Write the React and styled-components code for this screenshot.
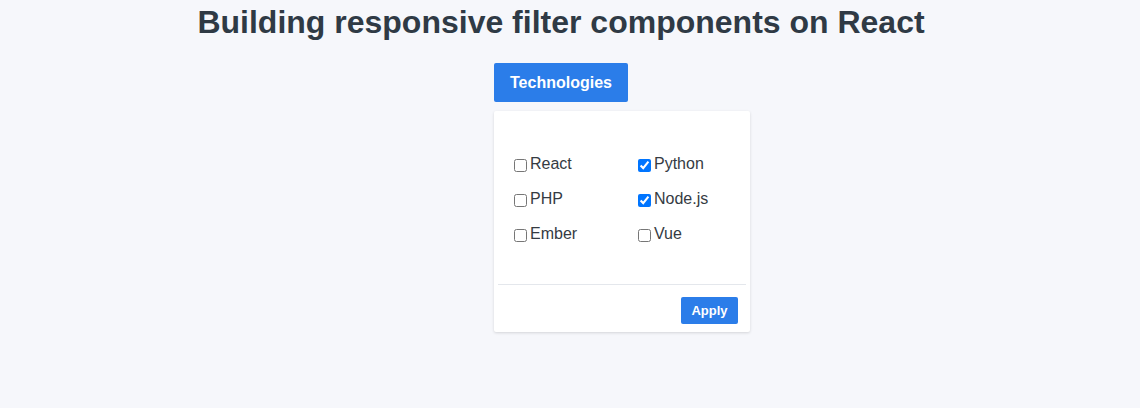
import React, { useState } from "react";
import styled, { createGlobalStyle } from "styled-components";

const GlobalStyle = createGlobalStyle`
  html, body {
    margin: 0;
    padding: 0;
    background: #f6f7fb;
    font-family: "Liberation Sans", Arial, sans-serif;
  }
`;

const Page = styled.div`
  width: 1122px;
  height: 408px;
  display: flex;
  flex-direction: column;
  align-items: center;
`;

const Title = styled.h1`
  margin: 4px 0 0;
  font-size: 32px;
  font-weight: 700;
  color: #2f3a45;
  line-height: 37px;
`;

const Dropdown = styled.div`
  position: relative;
  margin-top: 22px;
`;

const ToggleButton = styled.button`
  width: 134px;
  height: 39px;
  border: none;
  border-radius: 2px;
  background: #2b7de9;
  color: #fff;
  font-family: inherit;
  font-size: 16px;
  font-weight: 700;
  cursor: pointer;
  padding: 0;
`;

const Panel = styled.div`
  position: absolute;
  top: calc(100% + 9px);
  left: 0;
  width: 256px;
  background: #fff;
  border-radius: 2px;
  box-shadow: 0 1px 3px rgba(0, 0, 0, 0.14);
  box-sizing: border-box;
`;

const Options = styled.div`
  display: grid;
  grid-template-columns: 124px 1fr;
  row-gap: 16px;
  padding: 43px 16px 41px;
`;

const Option = styled.label`
  display: flex;
  align-items: center;
  height: 19px;
  font-size: 16px;
  color: #353b43;
  cursor: pointer;
`;

const Check = styled.input`
  width: 13px;
  height: 13px;
  margin: 3px 3px 0 4px;
`;

const Footer = styled.div`
  margin: 0 4px;
  border-top: 1px solid #e4e7ec;
  padding: 12px 8px 8px;
  display: flex;
  justify-content: flex-end;
`;

const ApplyButton = styled.button`
  width: 57px;
  height: 27px;
  border: none;
  border-radius: 2px;
  background: #2b7de9;
  color: #fff;
  font-family: inherit;
  font-size: 13px;
  font-weight: 700;
  padding: 0;
  cursor: pointer;
`;

const initial = [
  { name: "React", checked: false },
  { name: "Python", checked: true },
  { name: "PHP", checked: false },
  { name: "Node.js", checked: true },
  { name: "Ember", checked: false },
  { name: "Vue", checked: false },
];

export default function App() {
  const [items, setItems] = useState(initial);
  const toggle = (i) =>
    setItems((prev) =>
      prev.map((it, idx) => (idx === i ? { ...it, checked: !it.checked } : it))
    );
  return (
    <>
      <GlobalStyle />
      <Page>
        <Title>Building responsive filter components on React</Title>
        <Dropdown>
          <ToggleButton>Technologies</ToggleButton>
          <Panel>
            <Options>
              {items.map((it, i) => (
                <Option key={it.name}>
                  <Check
                    type="checkbox"
                    checked={it.checked}
                    onChange={() => toggle(i)}
                  />
                  {it.name}
                </Option>
              ))}
            </Options>
            <Footer>
              <ApplyButton>Apply</ApplyButton>
            </Footer>
          </Panel>
        </Dropdown>
      </Page>
    </>
  );
}
